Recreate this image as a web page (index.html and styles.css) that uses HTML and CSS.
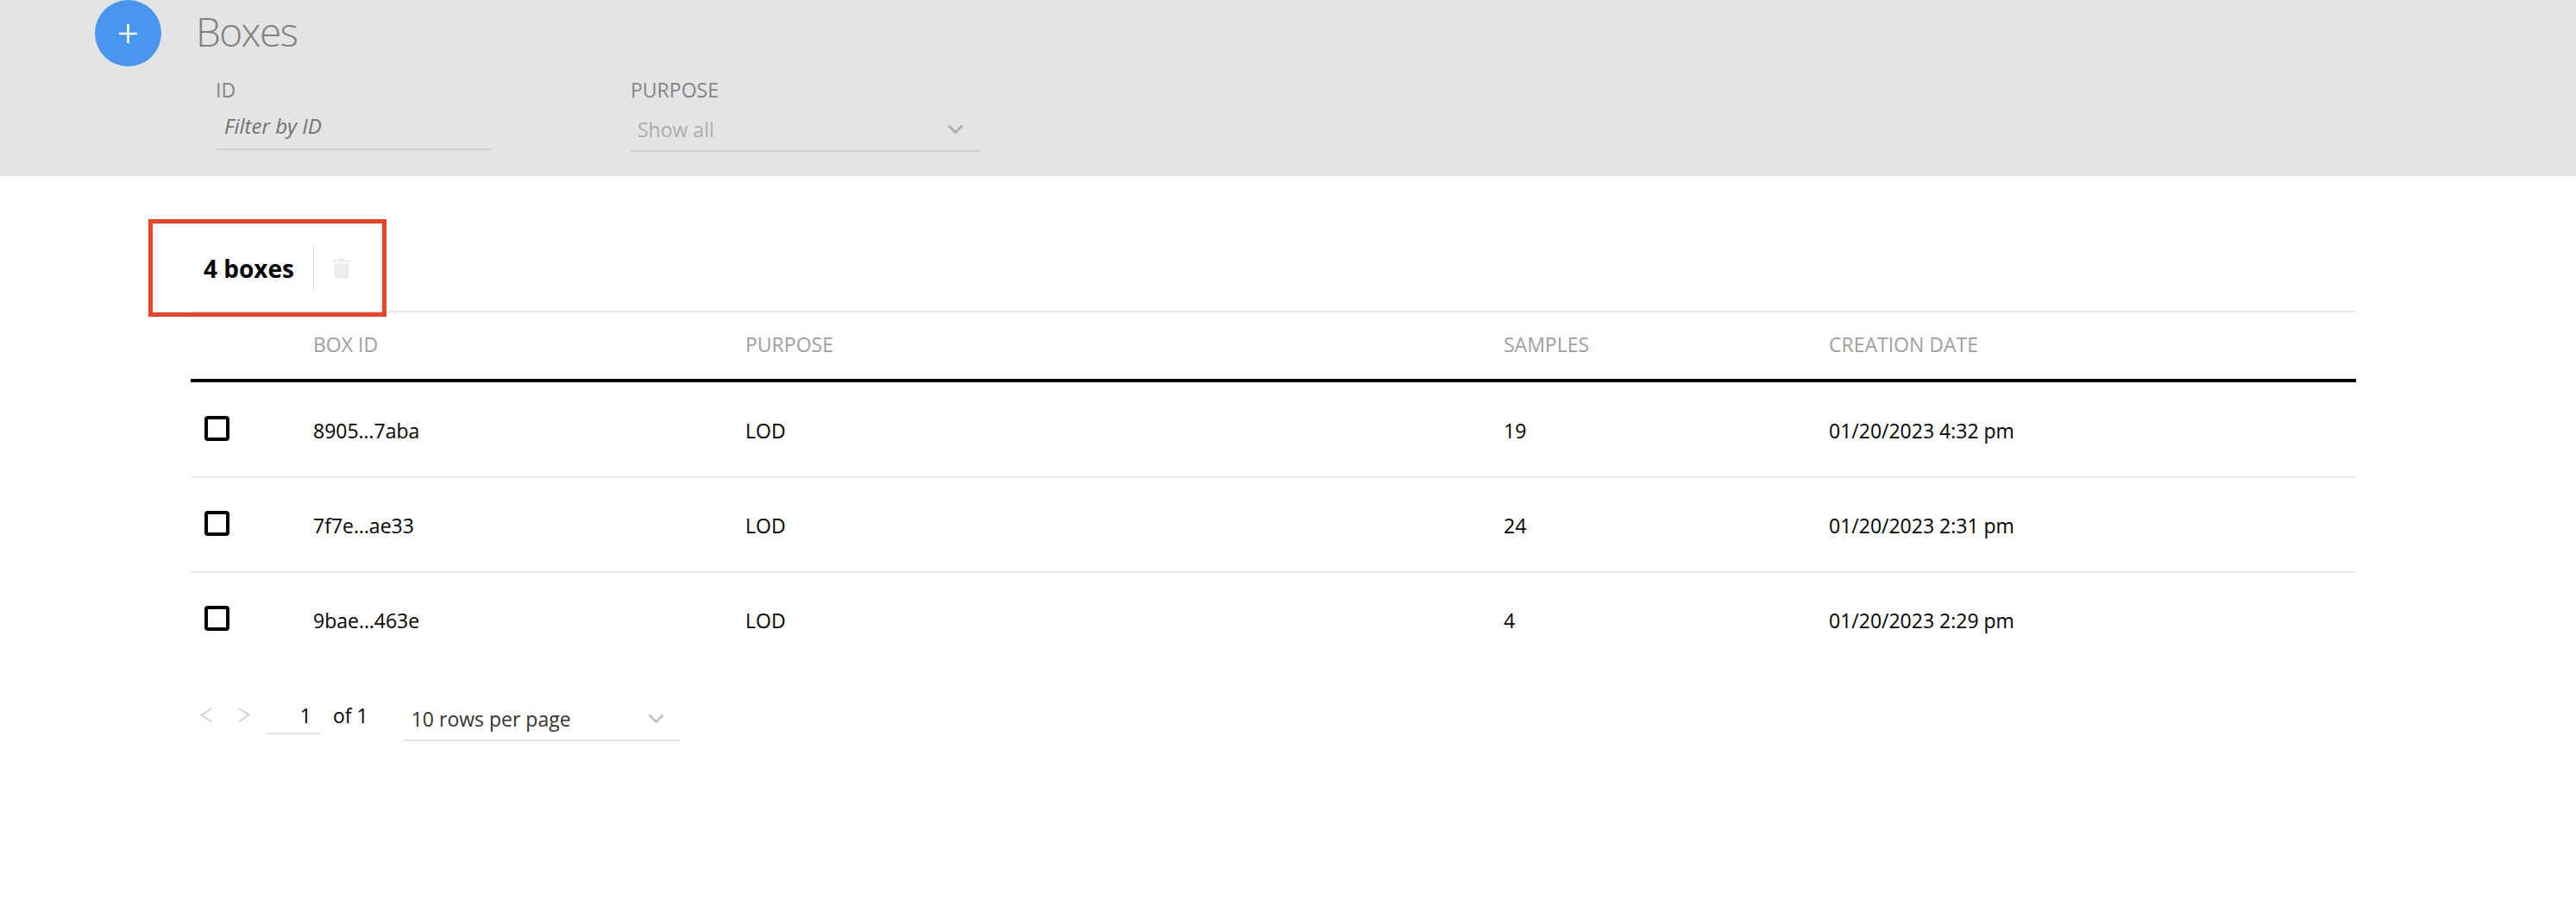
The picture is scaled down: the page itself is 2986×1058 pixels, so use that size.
FILE: index.html
```html
<!DOCTYPE html>
<html lang="en">
<head>
<meta charset="utf-8">
<title>Boxes</title>
<link rel="stylesheet" href="styles.css">
</head>
<body>
<header class="header">
  <div class="title-row">
    <button class="add" type="button" aria-label="Add box">
      <svg width="21" height="22" viewBox="0 0 21 22"><path d="M10.500 0v22M0 11h21" stroke="#fff" stroke-width="2.600" fill="none"/></svg>
    </button>
    <h1 class="title">Boxes</h1>
  </div>
  <div class="filters">
    <div class="filter filter-id">
      <div class="filter-label">ID</div>
      <div class="filter-input">Filter by ID</div>
    </div>
    <div class="filter filter-purpose">
      <div class="filter-label">PURPOSE</div>
      <div class="filter-select">
        <span>Show all</span>
        <svg class="chev" width="19" height="12" viewBox="0 0 19 12"><path d="M1.500 1.500l8 8 8-8" stroke="#b0b0b0" stroke-width="3" fill="none"/></svg>
      </div>
    </div>
  </div>
</header>
<main class="main">
  <div class="toolbar">
    <span class="count">4 boxes</span>
    <span class="divider"></span>
    <svg class="trash" width="20" height="24" viewBox="0 0 20 24"><path d="M7 0h6l1 2h6v2.500H0V2h6zM1.500 6h17v15.500a2.500 2.500 0 0 1-2.500 2.500H4a2.500 2.500 0 0 1-2.500-2.500z" fill="#ececec"/></svg>
    <div class="highlight"></div>
  </div>
  <table class="table">
    <thead>
      <tr><th class="c-check"></th><th class="c-id">BOX ID</th><th class="c-purpose">PURPOSE</th><th class="c-samples">SAMPLES</th><th>CREATION DATE</th></tr>
    </thead>
    <tbody>
      <tr><td><span class="check"></span></td><td>8905…7aba</td><td>LOD</td><td>19</td><td>01/20/2023 4:32 pm</td></tr>
      <tr><td><span class="check"></span></td><td>7f7e…ae33</td><td>LOD</td><td>24</td><td>01/20/2023 2:31 pm</td></tr>
      <tr><td><span class="check"></span></td><td>9bae…463e</td><td>LOD</td><td>4</td><td>01/20/2023 2:29 pm</td></tr>
    </tbody>
  </table>
  <div class="pager">
    <svg class="arrow" width="14" height="17" viewBox="0 0 14 17"><path d="M13 1L1.500 8.500 13 16" stroke="#d2d2d2" stroke-width="2" fill="none"/></svg>
    <svg class="arrow arrow-next" width="14" height="17" viewBox="0 0 14 17"><path d="M1 1l11.500 7.500L1 16" stroke="#d2d2d2" stroke-width="2" fill="none"/></svg>
    <div class="page-input">1</div>
    <span class="page-of">of 1</span>
    <div class="rows-select">
      <span>10 rows per page</span>
      <svg class="chev" width="19" height="12" viewBox="0 0 19 12"><path d="M1.500 1.500l8 8 8-8" stroke="#c4c4c4" stroke-width="3" fill="none"/></svg>
    </div>
  </div>
</main>
</body>
</html>
```
FILE: styles.css
```css
* { box-sizing: border-box; }
html, body { margin: 0; padding: 0; background: #fff; }
body { font-family: "Open Sans", "Liberation Sans", sans-serif; color: #000; }

.header { height: 204px; background: #e4e4e4; overflow: hidden; }
.title-row { display: flex; align-items: center; padding-left: 110px; height: 77px; }
.add {
  width: 77px; height: 77px; border: 0; padding: 0; border-radius: 50%;
  background: #4a96ee; display: flex; align-items: center; justify-content: center;
}
.title {
  margin: 0 0 4px 40px; font-weight: 300; font-size: 46px; line-height: 73px;
  color: #808080; letter-spacing: -1.6px;
}
.filters { display: flex; padding-left: 250px; margin-top: 14px; }
.filter-label { font-size: 23px; line-height: 26px; color: #858585; }
.filter-id { width: 481px; }
.filter-purpose { width: 405px; }
.filter-input {
  width: 320px; height: 57px; padding: 15px 0 0 10px;
  font-style: italic; font-size: 24px; line-height: 28px; color: #727272;
  border-bottom: 2px solid #cfcfcf;
}
.filter-select {
  height: 59px; display: flex; align-items: center; justify-content: space-between;
  padding: 9px 19px 0 8px; font-size: 23px; color: #acacac;
  border-bottom: 2px solid #cfcfcf;
}

.main { margin: 0 255px 0 221px; }
.toolbar { position: relative; height: 158px; display: flex; align-items: center; padding: 57px 0 0 15px; border-bottom: 2px solid #e8e8e8; }
.count { font-weight: 700; font-size: 28px; line-height: 34px; }
.divider { width: 1px; height: 56px; background: #e4e4e4; margin-left: 22px; }
.trash { margin-left: 22px; }
.highlight { position: absolute; left: -49px; top: 50px; width: 276px; height: 113px; border: 5px solid #ee4423; }

.table { width: 100%; border-collapse: separate; border-spacing: 0; table-layout: fixed; }
.table th { font-weight: 400; font-size: 23px; color: #a0a0a0; text-align: left; padding: 0 0 3px; height: 81px; border-bottom: 4px solid #000; }
.c-check { width: 142px; }
.c-id { width: 501px; }
.c-purpose { width: 879px; }
.c-samples { width: 377px; }
.table td { font-size: 23px; height: 110px; padding: 2px 0 0; border-bottom: 2px solid #e8e8e8; }
.table tbody tr:first-child td { height: 111px; }
.table tbody tr:last-child td { border-bottom: 0; padding-top: 0; }
.check { display: block; width: 29px; height: 29px; margin: 0 0 5px 16px; border: 4px solid #000; border-radius: 4px; }

.pager { display: flex; align-items: flex-start; margin-top: 46px; padding-left: 11px; }
.arrow-next { margin-left: 30px; }
.page-input { width: 64px; height: 39px; margin: -8px 0 0 18px; padding: 2px 11px 0 0; text-align: right; font-size: 23px; line-height: 30px; border-bottom: 2px solid #e4e4e4; }
.page-of { margin: -6px 0 0 14px; font-size: 23px; line-height: 30px; }
.rows-select {
  width: 320px; height: 41px; margin: -2px 0 0 41px; padding: 0 18px 9px 9px;
  display: flex; align-items: center; justify-content: space-between;
  font-size: 23px; color: #333; border-bottom: 2px solid #e4e4e4;
}
```
